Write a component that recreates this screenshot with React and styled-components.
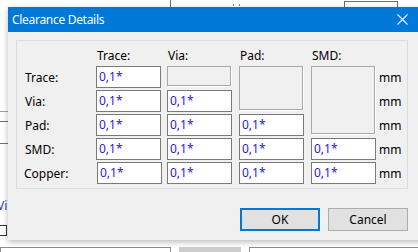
import React from "react";
import styled, { createGlobalStyle } from "styled-components";

const Global = createGlobalStyle`
  html, body { margin: 0; padding: 0; background: #ffffff; }
  body { width: 418px; height: 252px; overflow: hidden; font-family: "Segoe UI", "Noto Sans", "Open Sans", sans-serif; }
`;

const Desktop = styled.div`
  position: relative;
  width: 418px;
  height: 252px;
  overflow: hidden;
  background: #ffffff;
`;

const Scrap = styled.div`
  position: absolute;
  box-sizing: border-box;
`;

const Window = styled.div`
  position: absolute;
  left: 8px;
  top: 7px;
  width: 417px;
  height: 233px;
  display: flex;
  flex-direction: column;
  background: #f0f0f0;
  box-shadow: 0 2px 6px rgba(0, 0, 0, 0.28);
`;

const TitleBar = styled.div`
  height: 25px;
  flex: none;
  display: flex;
  align-items: center;
  background: #0078d7;
  color: #ffffff;
  font-size: 12px;
`;

const Title = styled.div`
  flex: 1;
  padding-left: 4px;
  padding-bottom: 1px;
  letter-spacing: -0.3px;
`;

const CloseBtn = styled.div`
  width: 46px;
  height: 25px;
  display: flex;
  align-items: center;
  justify-content: center;
`;

const Body = styled.div`
  flex: 1;
  display: flex;
  flex-direction: column;
  padding: 8px 17px 9px 8px;
`;

const Group = styled.div`
  border: 1px solid #dcdcdc;
  height: 149px;
  box-sizing: border-box;
  padding: 6px 0 0 8px;
`;

const Grid = styled.div`
  display: grid;
  grid-template-columns: 71px 71px 72px 72px 68px auto;
  grid-template-rows: 17px repeat(5, 22px);
  row-gap: 2px;
  font-size: 12px;
  color: #000000;
`;

const Head = styled.div`
  display: flex;
  align-items: center;
  padding-left: 1px;
  grid-column: ${(p) => p.$col};
  grid-row: 1;
`;

const Label = styled.div`
  display: flex;
  align-items: center;
  grid-column: 1;
  grid-row: ${(p) => p.$row};
  margin-left: ${(p) => p.$shift || 0}px;
`;

const Unit = styled.div`
  display: flex;
  align-items: center;
  grid-column: 6;
  grid-row: ${(p) => p.$row};
`;

const Input = styled.div`
  grid-column: ${(p) => p.$col};
  grid-row: ${(p) => p.$row};
  width: 65px;
  height: 22px;
  box-sizing: border-box;
  border: 1px solid #7a7a7a;
  background: #ffffff;
  color: #3216d6;
  display: flex;
  align-items: center;
  padding-left: 2px;
  padding-bottom: 1px;
  margin-left: ${(p) => p.$shift || 0}px;
`;

const Disabled = styled.div`
  grid-column: ${(p) => p.$col};
  grid-row: ${(p) => p.$rows};
  width: 64px;
  height: calc(100% - 2px);
  box-sizing: border-box;
  border: 1px solid #a8a8a8;
  box-shadow: 1px 1px 0 #ffffff;
  background: #f0f0f0;
`;

const Buttons = styled.div`
  margin-top: auto;
  display: flex;
  justify-content: flex-end;
  gap: 8px;
`;

const Button = styled.div`
  width: 80px;
  height: 23px;
  box-sizing: border-box;
  display: flex;
  align-items: center;
  justify-content: center;
  font-size: 12px;
  color: #000000;
  background: #e1e1e1;
  border: ${(p) => (p.$default ? "2px solid #0078d7" : "1px solid #adadad")};
  padding-bottom: 1px;
`;

const cols = [2, 3, 4, 5];
const rows = ["Trace:", "Via:", "Pad:", "SMD:", "Copper:"];

export default function App() {
  return (
    <>
      <Global />
      <Desktop>
        <Scrap style={{ left: 170, top: 0, width: 1, height: 7, background: "#6e6e6e" }} />
        <Scrap style={{ left: 233, top: 4, width: 1, height: 2, background: "#888" }} />
        <Scrap style={{ left: 239, top: 4, width: 1, height: 2, background: "#888" }} />
        <Scrap style={{ left: 344, top: 1, width: 54, height: 8, border: "1px solid #6e6e6e", borderBottom: "none" }} />
        <Scrap style={{ left: 0, top: 111, width: 8, height: 1, background: "#a0a0a0" }} />
        <Scrap style={{ left: 0, top: 121, width: 8, height: 1, background: "#6e6e6e" }} />
        <Scrap style={{ left: 0, top: 143, width: 8, height: 1, background: "#6e6e6e" }} />
        <Scrap style={{ left: -3, top: 197, fontSize: 12, color: "#1c3cb4", fontFamily: "Noto Sans, sans-serif" }}>Vi</Scrap>
        <Scrap style={{ left: -4, top: 225, width: 11, height: 11, border: "1px solid #333" }} />
        <Scrap style={{ left: 0, top: 247, width: 171, height: 8, border: "1px solid #8a8a9a" }} />
        <Scrap style={{ left: 179, top: 247, width: 62, height: 8, background: "#cccccc" }} />
        <Scrap style={{ left: 249, top: 247, width: 175, height: 8, border: "1px solid #8a8a9a" }} />
        <Window>
          <TitleBar>
            <Title>Clearance Details</Title>
            <CloseBtn>
              <svg width="11" height="11" viewBox="0 0 11 11">
                <path d="M0.5 0.5 L10.5 10.5 M10.5 0.5 L0.5 10.5" stroke="#ffffff" strokeWidth="1.1" fill="none" />
              </svg>
            </CloseBtn>
          </TitleBar>
          <Body>
            <Group>
              <Grid>
                <Head $col={2}>Trace:</Head>
                <Head $col={3}>Via:</Head>
                <Head $col={4}>Pad:</Head>
                <Head $col={5}>SMD:</Head>
                {rows.map((r, i) => (
                  <Label key={r} $row={i + 2} $shift={r === "Copper:" ? -1 : 0}>
                    {r}
                  </Label>
                ))}
                {rows.map((r, i) => (
                  <Unit key={"u" + r} $row={i + 2}>mm</Unit>
                ))}
                <Disabled $col={3} $rows="2 / span 1" />
                <Disabled $col={4} $rows="2 / span 2" />
                <Disabled $col={5} $rows="2 / span 3" />
                {rows.map((r, i) =>
                  cols.map((c, j) =>
                    j <= i && !(j === 1 && i === 0) ? (
                      <Input key={r + c} $col={c} $row={i + 2} $shift={i === 4 && j === 0 ? 1 : 0}>
                        0,1*
                      </Input>
                    ) : null
                  )
                )}
              </Grid>
            </Group>
            <Buttons>
              <Button $default>OK</Button>
              <Button>Cancel</Button>
            </Buttons>
          </Body>
        </Window>
      </Desktop>
    </>
  );
}
